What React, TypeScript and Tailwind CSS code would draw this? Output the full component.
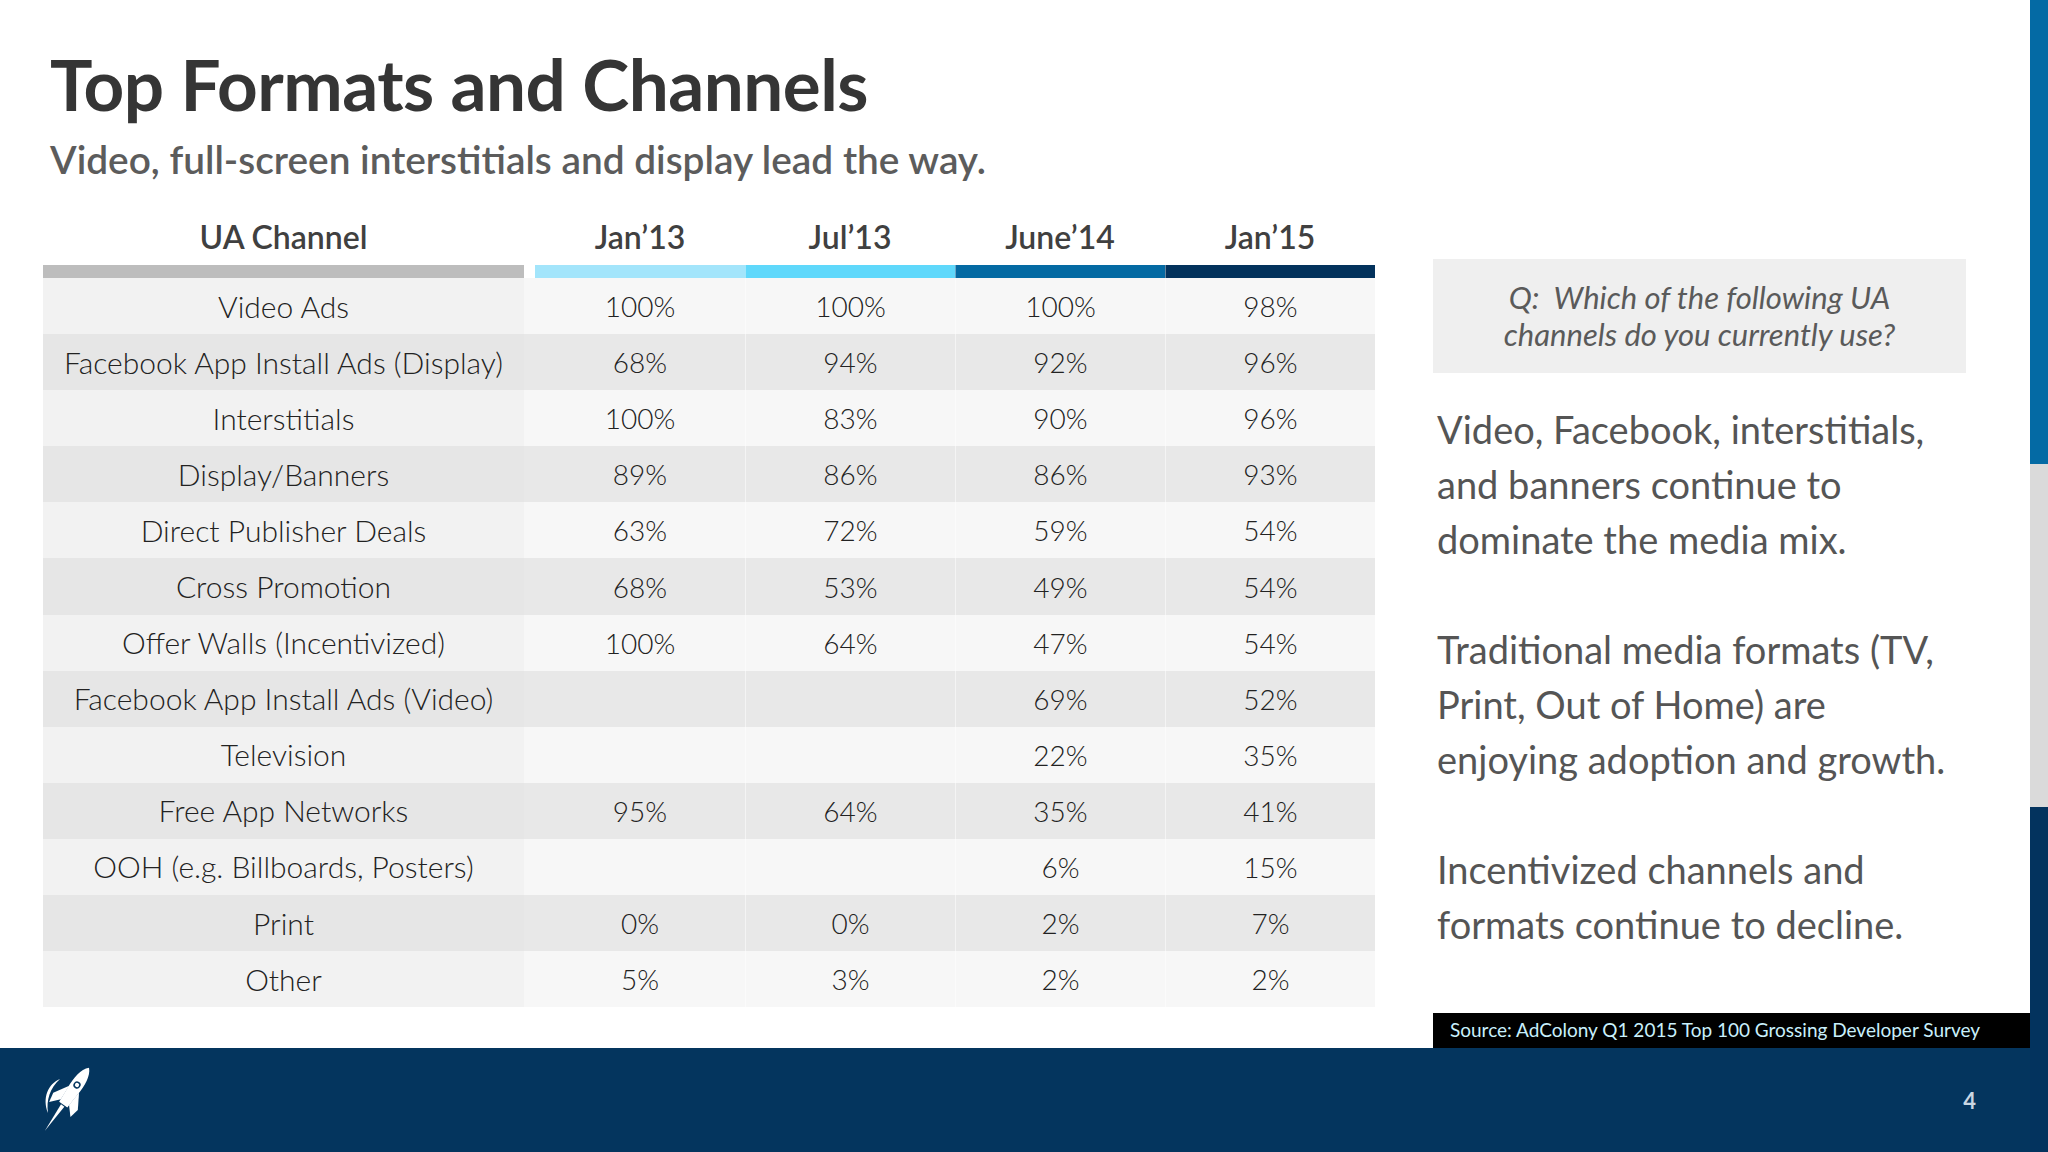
const rows: [string, string, string, string, string][] = [
  ["Video Ads", "100%", "100%", "100%", "98%"],
  ["Facebook App Install Ads (Display)", "68%", "94%", "92%", "96%"],
  ["Interstitials", "100%", "83%", "90%", "96%"],
  ["Display/Banners", "89%", "86%", "86%", "93%"],
  ["Direct Publisher Deals", "63%", "72%", "59%", "54%"],
  ["Cross Promotion", "68%", "53%", "49%", "54%"],
  ["Offer Walls (Incentivized)", "100%", "64%", "47%", "54%"],
  ["Facebook App Install Ads (Video)", "", "", "69%", "52%"],
  ["Television", "", "", "22%", "35%"],
  ["Free App Networks", "95%", "64%", "35%", "41%"],
  ["OOH (e.g. Billboards, Posters)", "", "", "6%", "15%"],
  ["Print", "0%", "0%", "2%", "7%"],
  ["Other", "5%", "3%", "2%", "2%"],
];

const font = { fontFamily: "Lato, 'Open Sans', sans-serif" };

function Rocket() {
  return (
    <svg width="50" height="68" viewBox="0 0 50 68" className="block">
      <path d="M18 13 C6 18 0 32 6 47 C4 34 8 22 18 13 Z" fill="#fff" />
      <g transform="translate(35 19) rotate(35)">
        <path d="M0 -21 C6 -15 7 -4 6 8 L5 24 L-5 24 L-6 8 C-7 -4 -6 -15 0 -21 Z" fill="#fff" />
        <path d="M-6 5 L-15 20 L-13 30 L-5 21 Z" fill="#fff" />
        <path d="M6 5 L15 20 L13 30 L5 21 Z" fill="#fff" />
        <path d="M-2 25 L2 25 L0 56 Z" fill="#fff" />
        <circle cx="0" cy="0" r="3.6" fill="#04355e" />
        <circle cx="0" cy="0" r="2.1" fill="#fff" />
      </g>
    </svg>
  );
}

export default function App() {
  return (
    <div className="w-[2048px] h-[1152px] flex bg-white overflow-hidden" style={font}>
      <div className="flex-1 flex flex-col">
        <div className="flex-1 flex flex-col">
          <h1 className="ml-[50px] mt-[44px] text-[71px] leading-[80px] font-bold text-[#353535] tracking-[-0.5px]">
            Top Formats and Channels
          </h1>
          <p className="ml-[50px] mt-[12px] text-[38.8px] leading-[46px] font-semibold text-[#5c5c5c]">
            Video, full-screen interstitials and display lead the way.
          </p>

          <div className="flex mt-[30px]">
            {/* table */}
            <div className="ml-[43px] w-[1332px]">
              <div className="flex h-[50px] items-center text-[32px] font-semibold text-[#404040]">
                <div className="w-[481px] text-center">UA Channel</div>
                <div className="w-[11px]" />
                <div className="w-[210px] text-center">Jan’13</div>
                <div className="w-[210px] text-center">Jul’13</div>
                <div className="w-[210px] text-center">June’14</div>
                <div className="w-[210px] text-center">Jan’15</div>
              </div>
              <div className="flex h-[13px] mt-[3px]">
                <div className="w-[481px] bg-[#bdbdbd]" />
                <div className="w-[11px]" />
                <div className="w-[210px] bg-[#a3e5fb]" />
                <div className="w-[210px] bg-[#5fd8fb] border-l border-white/40" />
                <div className="w-[210px] bg-[#046aa3] border-l border-white/40" />
                <div className="w-[210px] bg-[#03325c] border-l border-white/40" />
              </div>
              {rows.map((r, i) => {
                const even = i % 2 === 1;
                return (
                  <div
                    key={r[0]}
                    className={`flex h-[56.1px] items-center font-light text-[#222] ${even ? "bg-[#e8e8e8]" : "bg-[#f7f7f7]"}`}
                  >
                    <div className={`w-[481px] h-full flex items-center justify-center text-[30px] ${even ? "bg-[#e6e6e6]" : "bg-[#f2f2f2]"}`}>
                      {r[0]}
                    </div>
                    <div className="w-[11px]" />
                    {r.slice(1).map((v, j) => (
                      <div
                        key={j}
                        className={`w-[210px] h-full flex items-center justify-center text-[28px] ${j > 0 ? "border-l border-white/50" : ""}`}
                      >
                        {v}
                      </div>
                    ))}
                  </div>
                );
              })}
            </div>

            {/* notes */}
            <div className="ml-[58px] w-[533px] flex flex-col">
              <div className="mt-[47px] h-[114px] bg-[#efefef] flex flex-col items-center justify-center text-[31px] leading-[37px] italic text-[#5a5a5a]">
                <div>Q:&nbsp; Which of the following UA</div>
                <div>channels do you currently use?</div>
              </div>
              <div className="mt-[29px] ml-[4px] text-[38px] leading-[55px] text-[#555]">
                <p>Video, Facebook, interstitials,</p>
                <p>and banners continue to</p>
                <p>dominate the media mix.</p>
                <p className="mt-[55px]">Traditional media formats (TV,</p>
                <p>Print, Out of Home) are</p>
                <p>enjoying adoption and growth.</p>
                <p className="mt-[55px]">Incentivized channels and</p>
                <p>formats continue to decline.</p>
              </div>
            </div>
          </div>

          <div className="mt-auto flex justify-end">
            <div className="w-[597px] h-[35px] bg-black flex items-center pl-[17px] text-[19px] text-[#c9f0fc]">
              Source: AdColony Q1 2015 Top 100 Grossing Developer Survey
            </div>
          </div>
        </div>
        <div className="h-[104px] bg-[#04355e] flex items-center justify-between pl-[42px] pr-[54px]">
          <Rocket />
          <div className="text-[22px] font-bold text-[#c9d6e2]">4</div>
        </div>
      </div>
      <div className="w-[18px] flex flex-col">
        <div className="h-[464px] bg-[#046aa4]" />
        <div className="h-[343px] bg-[#dadada]" />
        <div className="flex-1 bg-[#03335e]" />
      </div>
    </div>
  );
}
